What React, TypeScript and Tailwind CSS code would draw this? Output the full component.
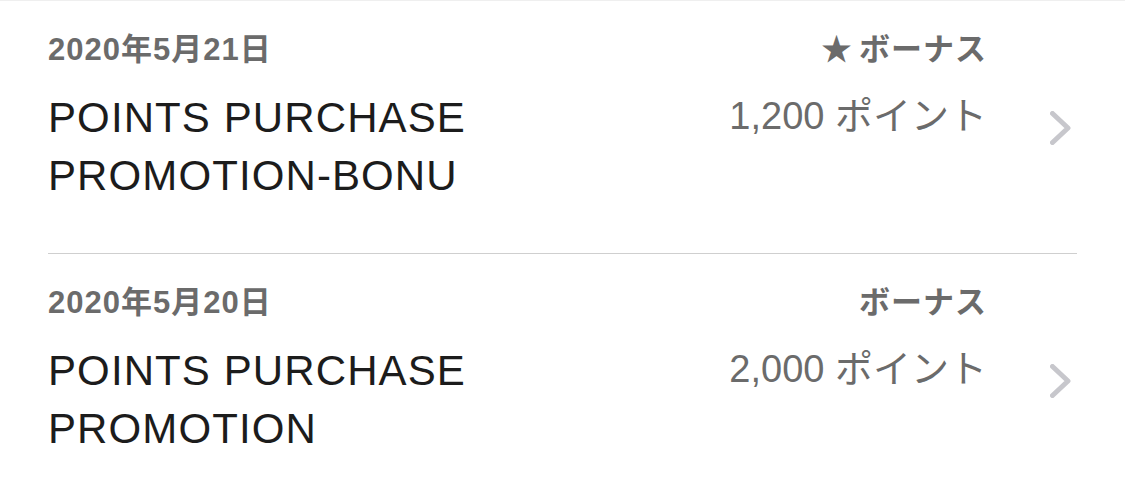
import React from 'react';

type Entry = {
  date: string;
  title: string[];
  label: string;
  star: boolean;
  points: string;
};

const entries: Entry[] = [
  {
    date: '2020年5月21日',
    title: ['POINTS PURCHASE', 'PROMOTION-BONU'],
    label: 'ボーナス',
    star: true,
    points: '1,200 ポイント',
  },
  {
    date: '2020年5月20日',
    title: ['POINTS PURCHASE', 'PROMOTION'],
    label: 'ボーナス',
    star: false,
    points: '2,000 ポイント',
  },
];

const Chevron: React.FC = () => (
  <svg width="21" height="34" viewBox="0 0 21 34" fill="none" className="shrink-0">
    <path
      d="M2.5 2.5 L18 17 L2.5 31.5"
      stroke="#c7c7cc"
      strokeWidth="5"
      strokeLinecap="round"
      strokeLinejoin="round"
    />
  </svg>
);

const Row: React.FC<{ entry: Entry }> = ({ entry }) => (
  <div className="mx-[48px] h-[253px] shrink-0 border-b border-[#cfcfcf] flex pt-[27px]">
    {/* left: date + title */}
    <div className="flex-1 min-w-0">
      <div className="text-[31px] leading-[44px] tracking-[1px] font-bold text-[#6b6b6b]">{entry.date}</div>
      <div className="mt-[17px] text-[42px] leading-[58px] tracking-[1.1px] text-[#1c1c1c]">
        {entry.title.map((t) => (
          <div key={t}>{t}</div>
        ))}
      </div>
    </div>

    {/* right: bonus + points */}
    <div className="flex items-start">
      <div className="text-right">
        <div className="text-[31px] leading-[44px] tracking-[1px] font-bold text-[#6b6b6b]">
          {entry.star && <span className="mr-[6px]">★</span>}
          {entry.label}
        </div>
        <div className="mt-[15px] text-[38px] leading-[58px] text-[#6b6b6b]">{entry.points}</div>
      </div>
      <div className="ml-[63px] mr-[6px] mt-[83px]">
        <Chevron />
      </div>
    </div>
  </div>
);

const App: React.FC = () => {
  return (
    <div className="w-[1125px] h-[488px] overflow-hidden bg-white border-t border-[#efefef] flex flex-col font-['Liberation_Sans','Noto_Sans_CJK_JP',sans-serif]">
      {entries.map((e) => (
        <Row key={e.date} entry={e} />
      ))}
    </div>
  );
};

export default App;
